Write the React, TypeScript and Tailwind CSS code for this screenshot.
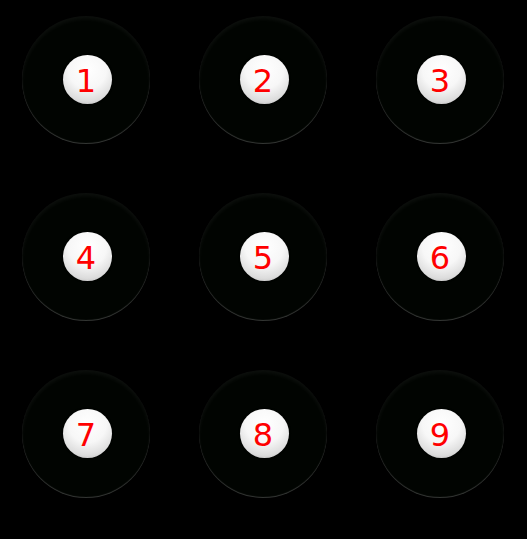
import React from 'react'

const keys = ['1', '2', '3', '4', '5', '6', '7', '8', '9']

const App: React.FC = () => {
  return (
    <div className="w-[527px] h-[539px] bg-black overflow-hidden">
      <div className="grid grid-cols-[repeat(3,128px)] gap-[49px] pl-[22px] pt-[16px]">
        {keys.map((k) => (
          <div
            key={k}
            className="relative w-[128px] h-[128px] rounded-full bg-[#010401] shadow-[inset_0_-1px_1px_rgba(255,255,255,0.22),inset_0_3px_4px_rgba(255,255,255,0.05)] flex items-center justify-center"
          >
            {/* knob */}
            <div className="absolute left-[41px] top-[39px] w-[49px] h-[49px] rounded-full bg-[radial-gradient(circle_at_50%_30%,#ffffff_0%,#f7f7f7_45%,#dcdcdc_75%,#a5a5a5_100%)] shadow-[0_0_1px_1px_rgba(0,0,0,0.6)]" />
            <span className="relative pt-[2px] text-[32px] leading-none text-[#ff0000] font-['DejaVu_Sans',sans-serif]">
              {k}
            </span>
          </div>
        ))}
      </div>
    </div>
  )
}

export default App
